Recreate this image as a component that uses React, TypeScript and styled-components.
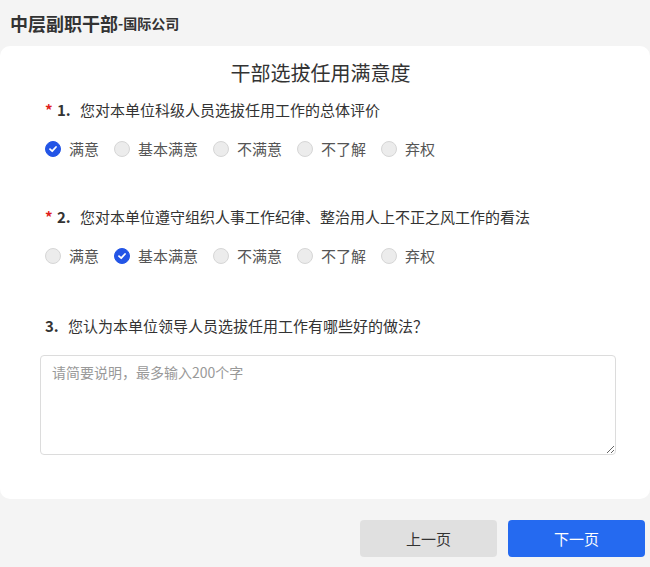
import styled, { createGlobalStyle } from "styled-components";

const GlobalStyle = createGlobalStyle`
  body {
    margin: 0;
    background: #f4f4f4;
    font-family: "Noto Sans CJK SC", "Noto Sans", sans-serif;
    color: #333;
  }
`;

const Page = styled.div`
  width: 650px;
  min-height: 567px;
  background: #f4f4f4;
  display: flex;
  flex-direction: column;
`;

const Header = styled.div`
  height: 46px;
  padding-left: 10px;
  display: flex;
  align-items: center;
  font-weight: 700;
  color: #333;
`;
const HeaderMain = styled.span`
  font-size: 18px;
`;
const HeaderSub = styled.span`
  font-size: 14px;
`;

const Card = styled.div`
  background: #fff;
  border-radius: 10px;
  padding: 12px 34px 44px 40px;
  display: flex;
  flex-direction: column;
`;

const Title = styled.h1`
  margin: 0;
  padding-right: 15px;
  text-align: center;
  font-size: 20px;
  font-weight: 400;
  line-height: 30px;
  color: #333;
`;

const Question = styled.div<{ $top: number }>`
  display: flex;
  flex-direction: column;
  margin-top: ${(p) => p.$top}px;
`;

const QuestionText = styled.div`
  display: flex;
  align-items: center;
  padding-left: 5px;
  font-size: 15px;
  line-height: 22px;
  color: #333;
`;
const Star = styled.span`
  color: #e0201c;
  font-weight: 700;
  width: 12px;
`;
const Num = styled.span`
  font-weight: 700;
  width: 23px;
`;

const Options = styled.div`
  display: flex;
  align-items: center;
  padding-left: 5px;
  margin-top: 17px;
  gap: 15px;
`;
const Option = styled.label`
  display: flex;
  align-items: center;
  gap: 8px;
  font-size: 15px;
  line-height: 22px;
  color: #555;
  cursor: pointer;
`;
const Radio = styled.span<{ $on: boolean }>`
  width: 16px;
  height: 16px;
  box-sizing: border-box;
  border-radius: 50%;
  border: 1px solid ${(p) => (p.$on ? "#2355e6" : "#d6d6d6")};
  background: ${(p) => (p.$on ? "#2355e6" : "#ececec")};
  display: flex;
  align-items: center;
  justify-content: center;
  svg {
    width: 10px;
    height: 10px;
  }
`;

const TextArea = styled.textarea`
  margin-top: 18px;
  height: 100px;
  box-sizing: border-box;
  border: 1px solid #dcdcdc;
  border-radius: 4px;
  padding: 6px 11px;
  font-family: inherit;
  font-size: 14px;
  line-height: 20px;
  color: #333;
  &::placeholder {
    color: #999;
  }
  &:focus {
    outline: none;
  }
`;

const Footer = styled.div`
  display: flex;
  justify-content: flex-end;
  gap: 11px;
  padding: 21px 5px 0 0;
`;
const Button = styled.button<{ $primary?: boolean }>`
  width: 137px;
  height: 37px;
  border: none;
  border-radius: 4px;
  font-family: inherit;
  font-size: 15px;
  background: ${(p) => (p.$primary ? "#256af0" : "#e0e0e0")};
  color: ${(p) => (p.$primary ? "#fff" : "#333")};
  cursor: pointer;
`;

const choices = ["满意", "基本满意", "不满意", "不了解", "弃权"];

function Check() {
  return (
    <svg viewBox="0 0 10 10" fill="none">
      <path
        d="M2 5.2 L4.2 7.2 L8 3"
        stroke="#fff"
        strokeWidth="1.8"
        strokeLinecap="round"
        strokeLinejoin="round"
      />
    </svg>
  );
}

function Choices({ selected }: { selected: number }) {
  return (
    <Options>
      {choices.map((c, i) => (
        <Option key={c}>
          <Radio $on={i === selected}>{i === selected && <Check />}</Radio>
          {c}
        </Option>
      ))}
    </Options>
  );
}

export default function App() {
  return (
    <Page>
      <GlobalStyle />
      <Header>
        <HeaderMain>中层副职干部</HeaderMain>
        <HeaderSub>-国际公司</HeaderSub>
      </Header>
      <Card>
        <Title>干部选拔任用满意度</Title>
        <Question $top={11}>
          <QuestionText>
            <Star>*</Star>
            <Num>1.</Num>
            您对本单位科级人员选拔任用工作的总体评价
          </QuestionText>
          <Choices selected={0} />
        </Question>
        <Question $top={46}>
          <QuestionText>
            <Star>*</Star>
            <Num>2.</Num>
            您对本单位遵守组织人事工作纪律、整治用人上不正之风工作的看法
          </QuestionText>
          <Choices selected={1} />
        </Question>
        <Question $top={48}>
          <QuestionText>
            <Num>3.</Num>
            您认为本单位领导人员选拔任用工作有哪些好的做法？
          </QuestionText>
          <TextArea placeholder="请简要说明，最多输入200个字" />
        </Question>
      </Card>
      <Footer>
        <Button>上一页</Button>
        <Button $primary>下一页</Button>
      </Footer>
    </Page>
  );
}
